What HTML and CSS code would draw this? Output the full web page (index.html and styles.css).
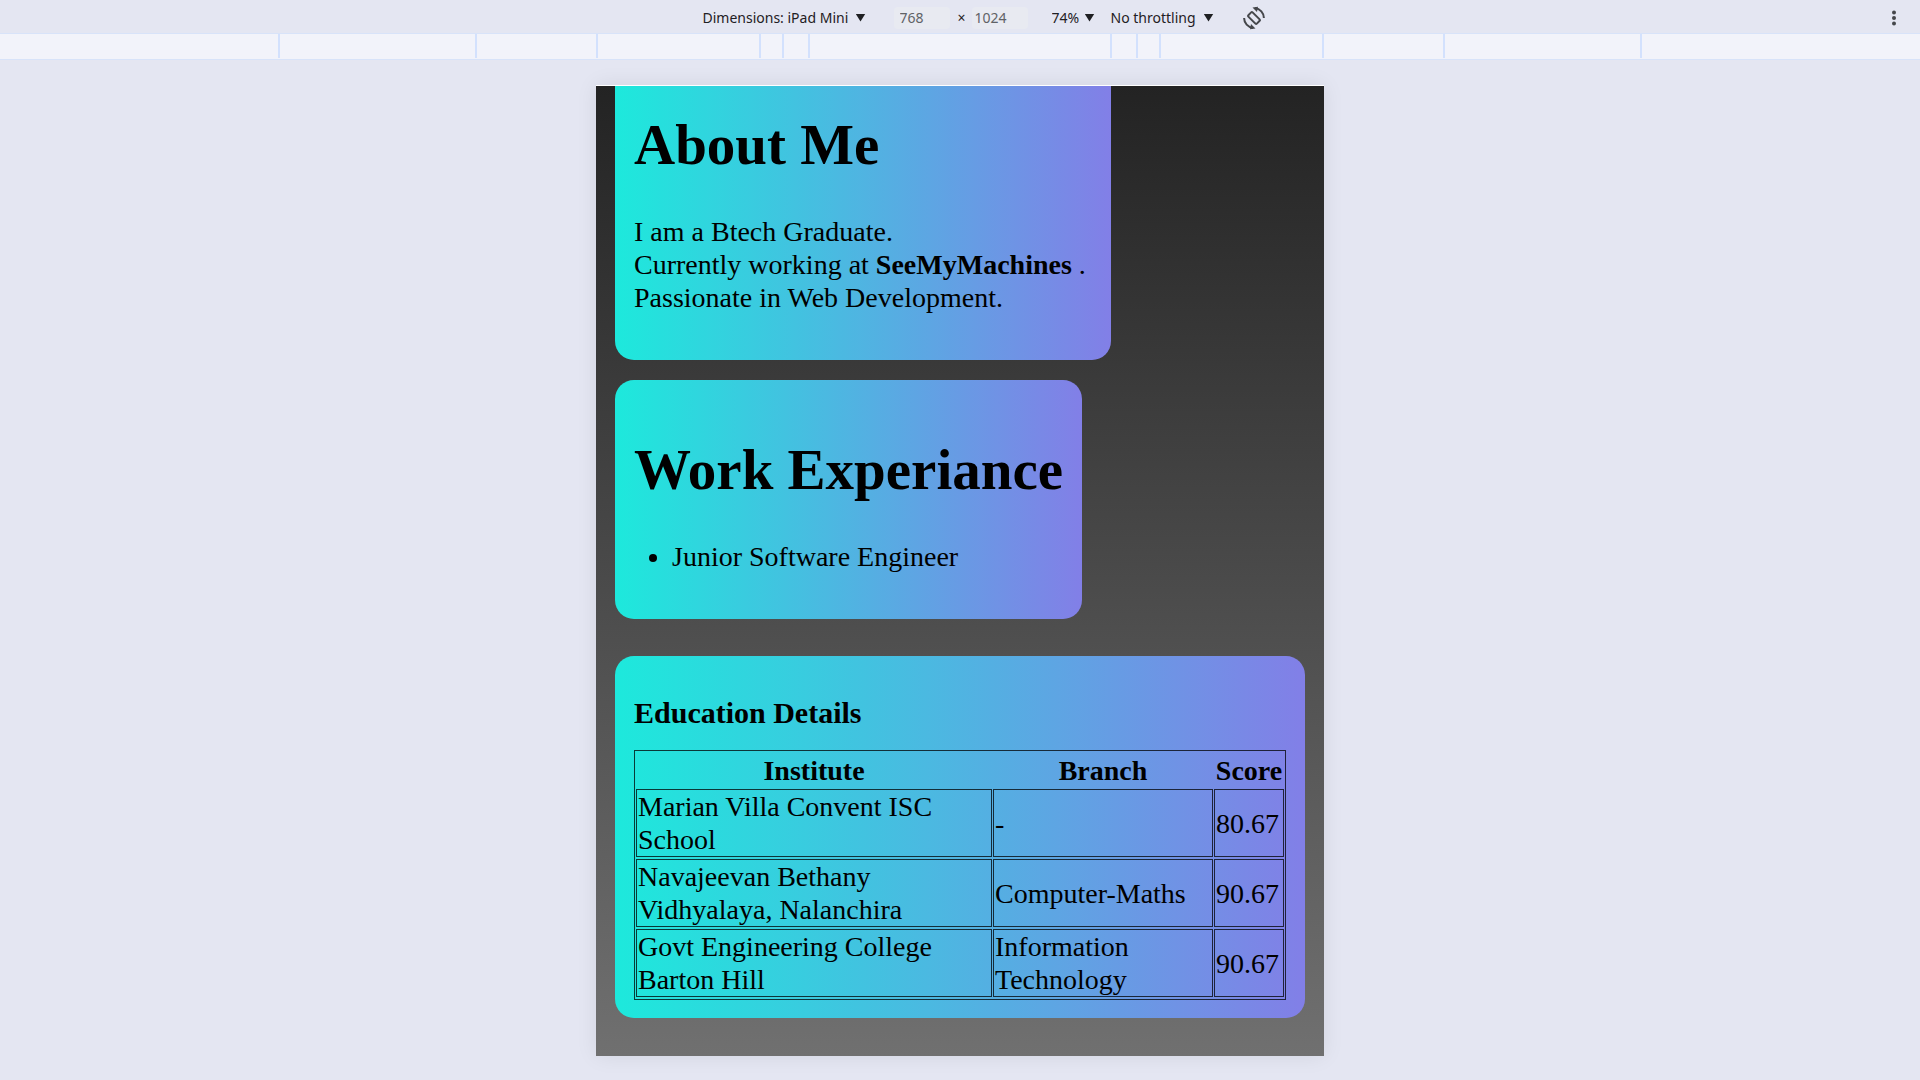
FILE: index.html
```html
<!DOCTYPE html>
<html lang="en">
<head>
<meta charset="utf-8">
<title>Portfolio - device view</title>
<link rel="stylesheet" href="styles.css">
</head>
<body>
<header class="toolbar">
  <form class="controls">
    <span class="picker picker-device">
      <select aria-label="Device"><option>Dimensions: iPad Mini</option></select>
    </span>
    <input class="size" type="text" aria-label="Width" value="768">
    <span class="times">×</span>
    <input class="size size-height" type="text" aria-label="Height" value="1024">
    <span class="picker picker-zoom">
      <select aria-label="Zoom"><option>74%</option></select>
    </span>
    <span class="picker picker-network">
      <select aria-label="Throttling"><option>No throttling</option></select>
    </span>
    <button class="icon-button" type="button" aria-label="Rotate">
      <svg width="24" height="24" viewBox="0 0 24 24" fill="none" stroke="#45474b" stroke-width="2">
        <rect x="9" y="6" width="6" height="12" rx="1" transform="rotate(-45 12 12)"/>
        <path d="M13 2.100A10 10 0 0 1 21.900 12M11 21.900A10 10 0 0 1 2.100 12"/>
        <path d="M10.500 1.500L16 .8 15 6zM13.500 22.500L8 23.200 9 18z" fill="#45474b" stroke="none"/>
      </svg>
    </button>
  </form>
  <button class="icon-button" type="button" aria-label="More options">
    <svg width="16" height="16" viewBox="0 0 16 16" fill="#45474b">
      <circle cx="8" cy="2.500" r="2"/><circle cx="8" cy="8" r="2"/><circle cx="8" cy="13.500" r="2"/>
    </svg>
  </button>
</header>
<div class="ruler">
  <span class="band band-laptop"></span>
  <span class="band band-tablet"></span>
  <span class="band band-large"></span>
  <span class="band band-medium"></span>
  <span class="band band-small"></span>
  <span class="band band-center"></span>
  <span class="band band-small band-end"></span>
  <span class="band band-medium band-end"></span>
  <span class="band band-large band-end"></span>
  <span class="band band-tablet band-end"></span>
  <span class="band band-laptop band-end"></span>
</div>
<main class="device">
  <section class="card about">
    <h1>About Me</h1>
    <p>I am a Btech Graduate.<br>Currently working at <b>SeeMyMachines</b> .<br>Passionate in Web Development.</p>
  </section>
  <section class="card work">
    <h1>Work Experiance</h1>
    <ul>
      <li>Junior Software Engineer</li>
    </ul>
  </section>
  <section class="card education">
    <h2>Education Details</h2>
    <table>
      <colgroup><col class="col-institute"><col class="col-branch"><col class="col-score"></colgroup>
      <thead>
        <tr><th>Institute</th><th>Branch</th><th>Score</th></tr>
      </thead>
      <tbody>
        <tr><td>Marian Villa Convent ISC School</td><td>-</td><td>80.67</td></tr>
        <tr><td>Navajeevan Bethany Vidhyalaya, Nalanchira</td><td>Computer-Maths</td><td>90.67</td></tr>
        <tr><td>Govt Engineering College Barton Hill</td><td>Information Technology</td><td>90.67</td></tr>
      </tbody>
    </table>
  </section>
</main>
</body>
</html>
```
FILE: styles.css
```css
* { box-sizing: border-box; }

body {
  margin: 0;
  background: #e4e6f2;
  color: #000;
  font: 28px/33px "Liberation Serif", serif;
}

/* Toolbar */
.toolbar {
  display: flex;
  align-items: center;
  height: 33px;
  padding: 2px 18px 0 82px;
  font: 14px/20px "Noto Sans", sans-serif;
  color: #1f2023;
}

.controls {
  display: flex;
  flex: 1;
  align-items: center;
  justify-content: center;
}

.picker {
  display: flex;
  align-items: center;
  justify-content: space-between;
}

.picker::after {
  content: "";
  width: 10px;
  height: 8px;
  background: #1f2023;
  clip-path: polygon(0 0, 100% 0, 50% 100%);
}

select,
.size {
  appearance: none;
  margin: 0;
  padding: 0;
  border: 0;
  background: transparent;
  color: inherit;
  font: inherit;
}

.picker-device { width: 163px; margin-right: 28px; }
.picker-zoom { width: 43px; margin-right: 16px; }
.picker-network { width: 103px; margin-right: 28px; }

.size {
  width: 56px;
  height: 22px;
  padding: 0 6px;
  border-radius: 4px;
  background: #e8eaf1;
  color: #606266;
}

.size-height {
  padding: 0 3px;
  margin-right: 24px;
}

.times { width: 22px; text-align: right; padding-right: 6px; }

.icon-button {
  display: flex;
  padding: 0;
  border: 0;
  background: transparent;
}

/* Breakpoint ruler */
.ruler {
  display: flex;
  justify-content: center;
  height: 27px;
  padding-bottom: 1px;
  border: solid #d8e3f9;
  border-width: 1px 0;
  background: #f2f3fa;
}

.band {
  flex: none;
  border-left: 2px solid #d3e1fd;
}

.band-end {
  border-left: 0;
  border-right: 2px solid #d3e1fd;
}

.band-laptop { width: 197px; }
.band-tablet { width: 121px; }
.band-large { width: 163px; }
.band-medium { width: 23px; }
.band-small { width: 26px; }
.band-center { width: 304px; border-right: 2px solid #d3e1fd; }

/* Emulated page */
.device {
  display: flex;
  flex-direction: column;
  align-items: flex-start;
  max-width: 728px;
  margin: 25px auto 24px;
  padding: 0 19px 38px;
  border-top: 1px solid #fff;
  background: linear-gradient(#232323, #707070);
  box-shadow: 0 0 20px rgba(0, 0, 0, 0.08);
}

.card {
  padding: 19px 19px 18px;
  border-radius: 19px;
  background: linear-gradient(to right, #1de9dc, #827fe7);
}

h1 {
  margin: 38px 0;
  font-size: 57px;
  line-height: 65px;
}

p, ul { margin: 38px 0 28px; }

ul { padding-left: 38px; }

.about {
  min-width: 496px;
  padding-top: 0;
  border-radius: 0 0 19px 19px;
}

.about h1 { margin-top: 26px; }

.work { margin: 20px 0 37px; }

.education { width: 100%; }

h2 {
  margin: 21px 0 20px;
  font-size: 30px;
  line-height: 34px;
}

table {
  width: 100%;
  table-layout: fixed;
  border: 1px solid rgba(0, 0, 0, 0.75);
  border-spacing: 1px 2px;
}

th { padding: 1px 0 0; }

td {
  padding: 0 1px;
  border: 1px solid rgba(0, 0, 0, 0.75);
}

.col-branch { width: 220px; }
.col-score { width: 70px; }
```
